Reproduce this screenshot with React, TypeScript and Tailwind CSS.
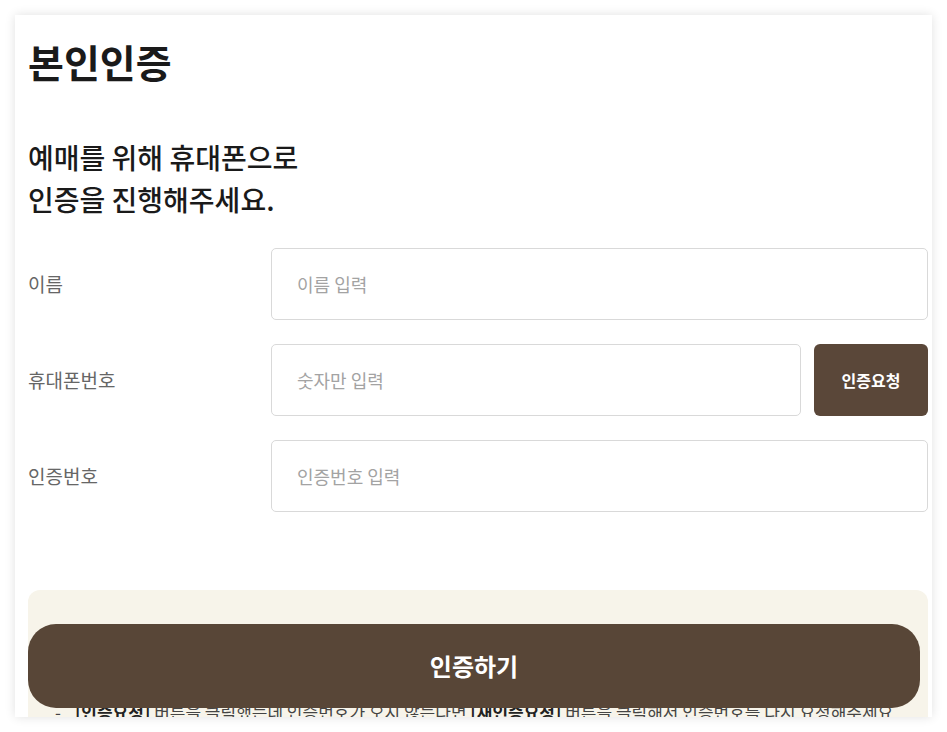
import React from "react";

const font = { fontFamily: '"Noto Sans CJK KR", "Noto Sans", sans-serif' };

function Field({ label, placeholder, action }: { label: string; placeholder: string; action?: string }) {
  return (
    <div className="flex items-center">
      <div className="w-[243px] shrink-0 text-[19px] text-[#666666]">{label}</div>
      <div className="flex flex-1 gap-[13px]">
        <input
          className="h-[72px] flex-1 min-w-0 rounded-[5px] border border-[#d9d9d9] bg-white px-[25px] text-[18px] text-[#222] placeholder:text-[#a3a3a3] outline-none"
          placeholder={placeholder}
        />
        {action && (
          <button className="h-[72px] w-[114px] shrink-0 rounded-[6px] bg-[#5a4739] text-[16px] font-bold text-white">
            {action}
          </button>
        )}
      </div>
    </div>
  );
}

export default function App() {
  return (
    <div className="bg-white p-[15px]" style={font}>
      <div className="relative h-[702px] w-[917px] overflow-hidden bg-white shadow-[0_0_10px_rgba(0,0,0,0.12)]">
        <div className="pl-[13px] pr-[4px]">
          <h1 className="pt-[17px] text-[39px] font-bold leading-[58px] text-[#1a1a1a]">본인인증</h1>
          <p className="mt-[46px] text-[28px] font-medium leading-[42px] text-[#1a1a1a]">
            예매를 위해 휴대폰으로
            <br />
            인증을 진행해주세요.
          </p>
          <div className="mt-[28px] flex flex-col gap-[24px]">
            <Field label="이름" placeholder="이름 입력" />
            <Field label="휴대폰번호" placeholder="숫자만 입력" action="인증요청" />
            <Field label="인증번호" placeholder="인증번호 입력" />
          </div>
          <div className="mt-[78px] rounded-[12px] bg-[#f7f4ea] px-[27px] pt-[40px] pb-[30px]">
            <div className="mb-[42px] text-[18px] font-bold leading-[27px] text-[#333]">유의사항</div>
            <ul className="flex flex-col gap-[6px] whitespace-nowrap text-[17px] leading-[26px] text-[#444]">
              <li>
                <span className="mr-[14px]">-</span>
                <b className="text-[#222]">[인증요청]</b> 버튼을 클릭했는데 인증번호가 오지 않는다면{" "}
                <b className="text-[#222]">[재인증요청]</b> 버튼을 클릭해서 인증번호를 다시 요청해주세요
              </li>
              <li>
                <span className="mr-[14px]">-</span>인증번호는 발송 후 3분 이내에 입력해주세요
              </li>
            </ul>
          </div>
        </div>
        <button className="absolute bottom-[9px] left-[13px] h-[84px] w-[892px] rounded-[28px] bg-[#584637] text-[24px] font-bold text-white">
          인증하기
        </button>
      </div>
    </div>
  );
}
